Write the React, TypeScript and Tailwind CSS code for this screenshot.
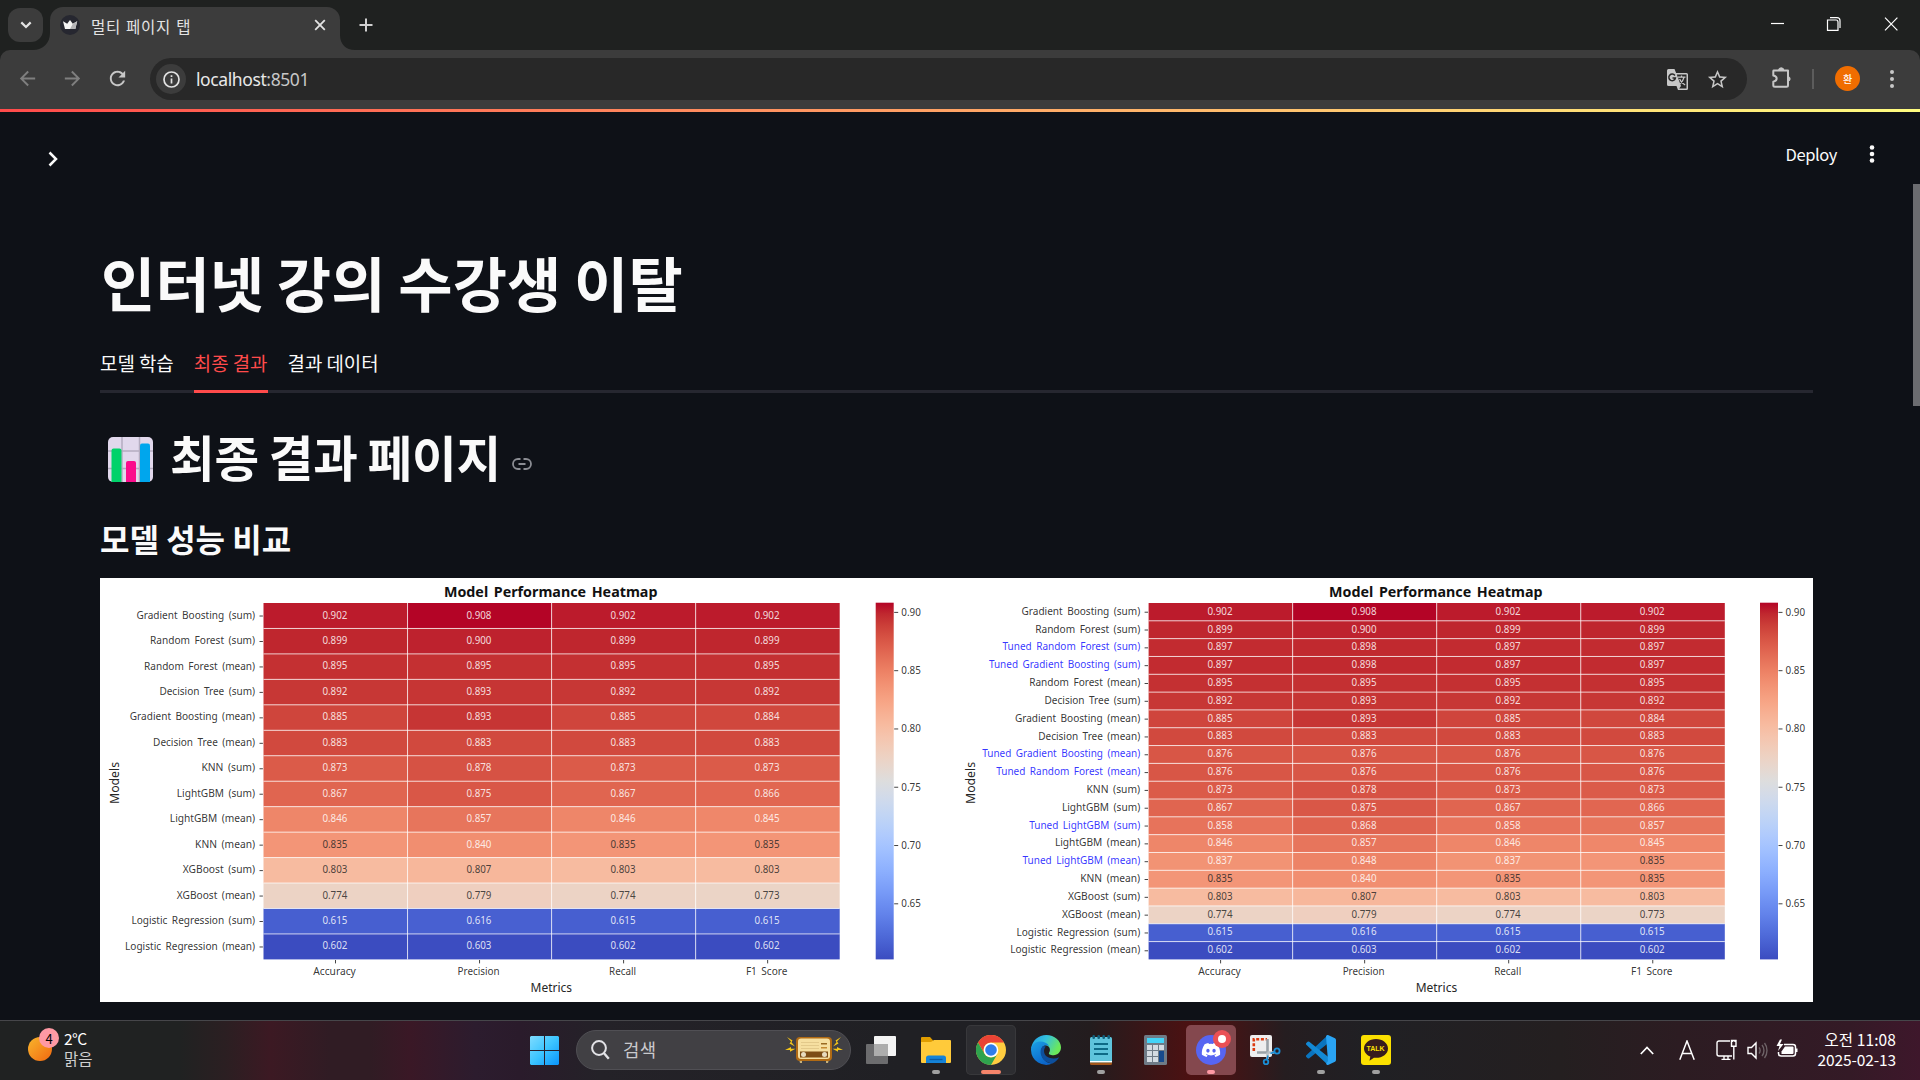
import React from "react";
import { FaDiscord } from "react-icons/fa";

const UI = "font-['Noto_Sans_CJK_KR','Noto_Sans',sans-serif]";

/* ---------- Heatmap data ---------- */

type Row = { name: string; width: number; values: number[]; tuned?: boolean };

const BASE: Record<string, Row> = {
  gbs: { name: "Gradient Boosting (sum)", width: 118.7, values: [0.902, 0.908, 0.902, 0.902] },
  rfs: { name: "Random Forest (sum)", width: 105, values: [0.899, 0.9, 0.899, 0.899] },
  rfm: { name: "Random Forest (mean)", width: 111, values: [0.895, 0.895, 0.895, 0.895] },
  dts: { name: "Decision Tree (sum)", width: 95.7, values: [0.892, 0.893, 0.892, 0.892] },
  gbm: { name: "Gradient Boosting (mean)", width: 125.3, values: [0.885, 0.893, 0.885, 0.884] },
  dtm: { name: "Decision Tree (mean)", width: 102, values: [0.883, 0.883, 0.883, 0.883] },
  kns: { name: "KNN (sum)", width: 53.7, values: [0.873, 0.878, 0.873, 0.873] },
  lgs: { name: "LightGBM (sum)", width: 78.3, values: [0.867, 0.875, 0.867, 0.866] },
  lgm: { name: "LightGBM (mean)", width: 85.3, values: [0.846, 0.857, 0.846, 0.845] },
  knm: { name: "KNN (mean)", width: 60, values: [0.835, 0.84, 0.835, 0.835] },
  xgs: { name: "XGBoost (sum)", width: 72.3, values: [0.803, 0.807, 0.803, 0.803] },
  xgm: { name: "XGBoost (mean)", width: 78.3, values: [0.774, 0.779, 0.774, 0.773] },
  lrs: { name: "Logistic Regression (sum)", width: 123.7, values: [0.615, 0.616, 0.615, 0.615] },
  lrm: { name: "Logistic Regression (mean)", width: 130, values: [0.602, 0.603, 0.602, 0.602] },
  trs: { name: "Tuned Random Forest (sum)", width: 137.7, values: [0.897, 0.898, 0.897, 0.897], tuned: true },
  tgs: { name: "Tuned Gradient Boosting (sum)", width: 151.3, values: [0.897, 0.898, 0.897, 0.897], tuned: true },
  tgm: { name: "Tuned Gradient Boosting (mean)", width: 158, values: [0.876, 0.876, 0.876, 0.876], tuned: true },
  trm: { name: "Tuned Random Forest (mean)", width: 144, values: [0.876, 0.876, 0.876, 0.876], tuned: true },
  tls: { name: "Tuned LightGBM (sum)", width: 111, values: [0.858, 0.868, 0.858, 0.857], tuned: true },
  tlm: { name: "Tuned LightGBM (mean)", width: 117.7, values: [0.837, 0.848, 0.837, 0.835], tuned: true },
};

const LEFT = ["gbs", "rfs", "rfm", "dts", "gbm", "dtm", "kns", "lgs", "lgm", "knm", "xgs", "xgm", "lrs", "lrm"].map((k) => BASE[k]);
const RIGHT = [
  "gbs", "rfs", "trs", "tgs", "rfm", "dts", "gbm", "dtm", "tgm", "trm",
  "kns", "lgs", "tls", "lgm", "tlm", "knm", "xgs", "xgm", "lrs", "lrm",
].map((k) => BASE[k]);

/* The "coolwarm" colour map, sampled at 33 even steps. */
const STOPS = [
  [59, 76, 192], [68, 90, 204], [77, 104, 215], [87, 117, 225], [98, 130, 234], [108, 142, 241], [119, 154, 247], [130, 165, 251],
  [141, 176, 254], [152, 185, 255], [163, 194, 255], [174, 201, 253], [184, 208, 249], [194, 213, 244], [204, 217, 238], [213, 219, 230],
  [221, 221, 221], [229, 216, 209], [236, 211, 197], [241, 204, 185], [245, 196, 173], [247, 187, 160], [247, 177, 148], [247, 166, 135],
  [244, 154, 123], [241, 141, 111], [236, 127, 99], [229, 112, 88], [222, 96, 77], [213, 80, 66], [203, 62, 56], [192, 40, 47],
  [180, 4, 38],
];

function coolwarm(v: number) {
  const t = Math.min(1, Math.max(0, (v - 0.602) / 0.306)) * 32;
  const i = Math.min(31, Math.floor(t));
  const f = t - i;
  const c = STOPS[i].map((a, n) => Math.round(a + (STOPS[i + 1][n] - a) * f));
  return `rgb(${c[0]},${c[1]},${c[2]})`;
}

const METRICS: [string, number][] = [["Accuracy", 42.5], ["Precision", 42], ["Recall", 27], ["F1 Score", 41.5]];

function Heatmap({ rows, x, barX, id, modelsX }: { rows: Row[]; x: number; barX: number; id: string; modelsX: number }) {
  const top = 603;
  const h = 356.4 / rows.length;
  const cw = 144.05;
  return (
    <g>
      <text x={x + 287.2} y={596.5} fontSize={15} fontWeight={700} fill="#111" textAnchor="middle" textLength={213.5} lengthAdjust="spacingAndGlyphs" wordSpacing={2}>
        Model Performance Heatmap
      </text>
      {rows.map((r, ri) => (
        <g key={r.name}>
          {r.values.map((v, ci) => (
            <g key={ci}>
              <rect x={x + ci * cw} y={top + ri * h} width={cw} height={h} fill={coolwarm(v)} />
              <text
                x={x + ci * cw + 71.4}
                y={top + ri * h + h / 2 + 2.8}
                fontSize={11}
                fill={v <= 0.8355 && v > 0.7 ? "#262626" : "#fff"}
                fillOpacity={0.84}
                textAnchor="middle"
                textLength={25}
                lengthAdjust="spacingAndGlyphs"
              >
                {v.toFixed(3)}
              </text>
            </g>
          ))}
          <text x={x - 8.4} y={top + ri * h + h / 2 + 2.9} fontSize={10.8} fill={r.tuned ? "#0000ff" : "#262626"} fillOpacity={r.tuned ? 0.8 : 0.92} textAnchor="end" textLength={r.width} lengthAdjust="spacingAndGlyphs" wordSpacing={2}>
            {r.name}
          </text>
          <path d={`M${x - 4} ${top + ri * h + h / 2 + 0.3}h3.4`} stroke="#444" strokeWidth={1} />
          {ri > 0 && <path d={`M${x} ${top + ri * h}h576.2`} stroke="#fff" strokeOpacity={0.72} strokeWidth={1} />}
        </g>
      ))}
      {[1, 2, 3].map((n) => (
        <path key={n} d={`M${x + n * cw} ${top}v356.4`} stroke="#fff" strokeOpacity={0.72} strokeWidth={1} />
      ))}
      {METRICS.map(([m, w], i) => (
        <g key={m}>
          <path d={`M${x + i * cw + 72} 960v3.4`} stroke="#444" strokeWidth={1} />
          <text x={x + i * cw + 71} y={975} fontSize={10.8} fill="#262626" fillOpacity={0.92} textAnchor="middle" textLength={w} lengthAdjust="spacingAndGlyphs" wordSpacing={2}>
            {m}
          </text>
        </g>
      ))}
      <text x={x + 287.8} y={992} fontSize={12.2} fill="#262626" textAnchor="middle" textLength={41.5} lengthAdjust="spacingAndGlyphs">
        Metrics
      </text>
      <text transform={`translate(${modelsX} 783) rotate(-90)`} fontSize={12.2} fill="#262626" textAnchor="middle" textLength={42} lengthAdjust="spacingAndGlyphs">
        Models
      </text>
      <defs>
        <linearGradient id={id} x1="0" y1="1" x2="0" y2="0">
          {STOPS.map((c, i) => (
            <stop key={i} offset={i / 32} stopColor={`rgb(${c[0]},${c[1]},${c[2]})`} />
          ))}
        </linearGradient>
      </defs>
      <rect x={barX} y={602.7} width={18} height={356.7} fill={`url(#${id})`} />
      {["0.90", "0.85", "0.80", "0.75", "0.70", "0.65"].map((t, i) => (
        <g key={t}>
          <path d={`M${barX + 18.5} ${612.4 + i * 58.28}h4`} stroke="#444" strokeWidth={1} />
          <text x={barX + 25.6} y={615.8 + i * 58.28} fontSize={10.8} fill="#262626" fillOpacity={0.92} textLength={19.5} lengthAdjust="spacingAndGlyphs">
            {t}
          </text>
        </g>
      ))}
    </g>
  );
}

/* ---------- Browser chrome ---------- */

function Tri({ d, size = 20, color = "#c7c7c7" }: { d: string; size?: number; color?: string }) {
  return (
    <svg width={size} height={size} viewBox="0 0 24 24" fill={color} className="shrink-0">
      <path d={d} />
    </svg>
  );
}

const BACK = "M20 11H7.83l5.59-5.59L12 4l-8 8 8 8 1.41-1.41L7.83 13H20v-2z";
const FWD = "M4 11h12.17l-5.59-5.59L12 4l8 8-8 8-1.41-1.41L16.17 13H4v-2z";
const RELOAD =
  "M17.65 6.35C16.2 4.9 14.21 4 12 4c-4.42 0-7.99 3.58-7.99 8s3.57 8 7.99 8c3.73 0 6.84-2.55 7.73-6h-2.08c-.82 2.33-3.04 4-5.65 4-3.31 0-6-2.69-6-6s2.69-6 6-6c1.66 0 3.14.69 4.22 1.78L13 11h7V4l-2.35 2.35z";
const STAR =
  "M22 9.24l-7.19-.62L12 2 9.19 8.63 2 9.24l5.46 4.73L5.82 21 12 17.27 18.18 21l-1.63-7.03L22 9.24zM12 15.4l-3.76 2.27 1-4.28-3.32-2.88 4.38-.38L12 6.1l1.71 4.04 4.38.38-3.32 2.88 1 4.28L12 15.4z";

function TabStrip() {
  return (
    <div className="flex h-[50px] bg-[#1f2120]">
      <div className="mt-2 ml-2 flex h-[34px] w-[35px] items-center justify-center rounded-[12px] bg-[#3c3c3c]">
        <svg width="12" height="8" viewBox="0 0 12 8" fill="none" stroke="#e3e3e3" strokeWidth="2.2">
          <path d="M1.3 1.4 6 6l4.700-4.600" />
        </svg>
      </div>
      <svg width="17" height="17" viewBox="0 0 17 17" className="-ml-[10px] mt-[33px] shrink-0" fill="#3c3c3c">
        <path d="M17 0v17H0C10 17 17 10 17 0z" />
      </svg>
      <div className="mt-[7px] flex h-[43px] w-[290px] items-center rounded-t-[13px] bg-[#3c3c3c] pr-[13px] pb-[7px] pl-[10px]">
        <svg width="20" height="20" viewBox="0 0 20 20">
          <circle cx="10" cy="10" r="10" fill="#262730" />
          <path d="M3 6.300l4.200 2.500L10 5l2.800 3.800L17.200 6.300 15.300 14H5z" fill="#f5f5f5" />
          <path d="M12.800 8.800 17.200 6.300 15.300 14H10z" fill="#b5b5b8" />
        </svg>
        <span className="mt-[2px] ml-[11px] grow text-[15.500px] leading-5 whitespace-nowrap tracking-[0.700px] text-[#e3e3e3] [word-spacing:1px]">멀티 페이지 탭</span>
        <svg width="14" height="14" viewBox="0 0 14 14" stroke="#e3e3e3" strokeWidth="1.800">
          <path d="M2.200 2.200l9.600 9.600M11.800 2.200l-9.600 9.600" />
        </svg>
      </div>
      <svg width="15" height="15" viewBox="0 0 15 15" className="mt-[35px] shrink-0" fill="#3c3c3c">
        <path d="M0 0v15h15C6 15 0 9 0 0z" />
      </svg>
      <svg width="14" height="14" viewBox="0 0 14 14" stroke="#d0d0d0" strokeWidth="2" className="mt-[18px] ml-1">
        <path d="M7 .5v13M.5 7h13" />
      </svg>
      <div className="ml-auto flex h-12 items-center">
        <svg width="127" height="14" viewBox="0 0 127 14" fill="none" stroke="#fff" strokeWidth="1.200" className="mr-[22px]">
          <path d="M0 6.500h13" />
          <path d="M56.500 3h8.500a2 2 0 0 1 2 2v8.400h-10.500z" strokeWidth="1.200" />
          <path d="M59 .7h7a3 3 0 0 1 3 3V11" />
          <path d="M114 .7l12.400 12.600M126.400.7l-12.400 12.600" />
        </svg>
      </div>
    </div>
  );
}

function Toolbar() {
  return (
    <div className="bg-[#1f2120]">
      <div className="flex h-[59px] items-center rounded-t-[10px] bg-[#3c3c3c] pr-[19px] pb-[2px] pl-[16px]">
        <Tri d={BACK} size={23} color="#7f7f7f" />
        <div className="w-[22px]" />
        <Tri d={FWD} size={23} color="#7f7f7f" />
        <div className="w-[22px]" />
        <Tri d={RELOAD} size={23} />
        <div className="mt-px ml-[21px] flex h-[42px] w-[1597px] items-center rounded-full bg-[#282828] pl-[6px]">
          <div className="flex size-[30px] items-center justify-center rounded-full bg-[#3c3c3c]">
            <svg width="17" height="17" viewBox="0 0 17 17" fill="none" stroke="#e3e3e3" strokeWidth="1.700">
              <circle cx="8.500" cy="8.500" r="7.500" />
              <path d="M8.500 7.500v5M8.500 4.300v1.800" />
            </svg>
          </div>
          <span className="mb-px ml-[10px] grow font-['Noto_Sans'] text-[17.500px] leading-6 tracking-[-0.400px] text-[#e8e8e8]">
            localhost<span className="text-[#c7c7c7]">:8501</span>
          </span>
          <svg width="21" height="21" viewBox="0 0 21 21" className="mr-[18px] shrink-0">
            <path d="M1.500 0h6l1.600 4h10.400A1.500 1.500 0 0 1 21 5.500v14a1.500 1.500 0 0 1-1.500 1.500H11l-1.500-4h-8A1.500 1.500 0 0 1 0 15.500v-14A1.500 1.500 0 0 1 1.500 0z" fill="#c7c7c7" />
            <path d="M9.800 5.500h9.700v14h-7.300l1.800-2.500z" fill="#282828" />
            <path d="M11 8.200h7.500M14.500 6.500v1.700M17 8.400c-.7 3-2.800 5.500-4.500 6.800M12.600 10c1 2.500 3 4.800 5.600 6" stroke="#c7c7c7" strokeWidth="1.300" fill="none" />
            <path d="M7.900 6.500A3.300 3.300 0 1 0 8.400 9H5.500" stroke="#282828" strokeWidth="1.500" fill="none" />
          </svg>
          <Tri d={STAR} size={23} />
          <div className="w-[18px]" />
        </div>
        <svg width="23" height="23" viewBox="0 0 23 23" className="ml-[24px] shrink-0" fill="none" stroke="#c7c7c7" strokeWidth="2">
          <path d="M2.500 3.500H17v14.800a1.500 1.500 0 0 1-1.500 1.500H3.800a1.500 1.500 0 0 1-1.500-1.500v-3.600c4.500-.8 4.500-5.400 0-6.200V4.500z" strokeLinejoin="round" />
          <path d="M7.500 3.500a2.700 2.700 0 0 1 5.400 0zM17.500 9.500a2.600 2.600 0 0 1 0 4.800z" fill="#c7c7c7" strokeWidth="1" />
        </svg>
        <div className="ml-[18px] h-[20px] w-[2px] bg-[#5c5c5c]" />
        <div className="ml-[21px] flex size-[25px] items-center justify-center rounded-full bg-[#f06d00] text-[10px] leading-none font-medium text-white">환</div>
        <svg width="4" height="20" viewBox="0 0 4 20" fill="#c7c7c7" className="mr-[7px] ml-auto">
          <circle cx="2" cy="3" r="2" />
          <circle cx="2" cy="10" r="2" />
          <circle cx="2" cy="17" r="2" />
        </svg>
      </div>
    </div>
  );
}

/* ---------- Taskbar ---------- */

function Task({ children, dot, active }: { children: React.ReactNode; dot?: string; active?: string }) {
  return (
    <div className="flex h-full w-[55px] items-start justify-center pt-1">
      <div className={`relative flex h-[50px] w-[50px] items-center justify-center rounded-[5px] ${active ?? ""}`}>
        {children}
        {dot && <div className={`absolute bottom-px left-1/2 h-1 -translate-x-1/2 rounded-full ${dot}`} />}
      </div>
    </div>
  );
}

const DOT = "w-2 bg-[#a0a0a0]";

function Radio() {
  return (
    <svg width="58" height="28" viewBox="0 0 58 28">
      <g fill="#f5c518">
        <path d="M2 1l5.500 3.500-1 1.800L10 10.500 4.500 7.500 6 5.500zM0 14l6-3v1.800h4.500L5 15.800V14zM56 1l-5.500 3.500 1 1.800L48 10.500l5.500-3L52 5.500zM58 14l-6-3v1.800h-4.500l5.500 3V14z" />
      </g>
      <path d="M14 23h3v4h-2zM41 23h3l-1 4h-2z" fill="#c8b27a" />
      <rect x="11" y="1" width="36" height="24" rx="4" fill="#b06a14" />
      <rect x="13" y="2.500" width="32" height="20.500" rx="3" fill="#f6dfa0" />
      <path d="M16 6.500h18M16 9.500h18M16 12.500h18" stroke="#e3c98a" />
      <rect x="36" y="7" width="6" height="1.500" fill="#9a6a22" />
      <rect x="36" y="11" width="6" height="1.500" fill="#c58a32" />
      <rect x="15" y="15.500" width="28" height="6" fill="#7d4d16" />
      <circle cx="18.500" cy="18.500" r="2.500" fill="#e8dcc0" />
      <circle cx="39.500" cy="18.500" r="2.500" fill="#e8dcc0" />
    </svg>
  );
}

function Taskbar() {
  return (
    <div className="flex h-[60px] border-t border-[#46464a] bg-[linear-gradient(90deg,#202222_0px,#202222_180px,#2b1f22_225px,#3c1923_270px,#301c24_330px,#301c24_370px,#3a1826_410px,#2c1c2e_475px,#2a1b2b_520px,#242228_600px,#202024_900px,#202024_1000px,#231c1e_1090px,#4c1112_1190px,#4a1213_1215px,#251d20_1285px,#202024_1370px,#241f20_1560px,#2c1c22_1680px,#341a26_1850px,#3e172b_1920px)]">
      <div className="flex w-[517px] pl-[28px]">
        <div className="relative mt-[5px] h-[42px] w-[36px]">
          <div className="mt-[11px] size-6 rounded-full bg-linear-to-br from-[#f7b52c] to-[#f0660f]" />
          <div className="absolute top-[2px] left-[11px] flex size-5 items-center justify-center rounded-full bg-[#ff99a4] text-[13px] leading-none text-black">4</div>
        </div>
        <div className="flex flex-col pt-[7px] text-[15.500px] leading-5 text-white">
          <span className="tracking-[-0.500px]">2°C</span>
          <span className="text-[#d0d0d0]">맑음</span>
        </div>
      </div>
      <Task>
        <svg width="29" height="29" viewBox="0 0 29 29">
          <defs>
            <linearGradient id="win" x1="0" y1="0" x2="1" y2="1">
              <stop offset="0" stopColor="#7fdcff" />
              <stop offset=".5" stopColor="#3cc4ff" />
              <stop offset="1" stopColor="#0a94fb" />
            </linearGradient>
          </defs>
          <path d="M1 0h13v14H0V1zM15 0h13l1 1v13H15zM0 15h14v14H1l-1-1zM15 15h14v13l-1 1H15z" fill="url(#win)" />
        </svg>
      </Task>
      <div className="mt-[9px] ml-[4px] flex h-10 w-[275px] items-center rounded-full border border-[#504f54] bg-[#414044] pr-[7px] pl-[14px]">
        <svg width="19" height="20" viewBox="0 0 19 20" fill="none" stroke="#e2e2e6" strokeWidth="2">
          <circle cx="8" cy="8" r="6.900" />
          <path d="M12.800 13l5 5.800" strokeWidth="2.400" />
        </svg>
        <span className="mb-[3px] ml-[13px] grow text-[17.800px] leading-6 tracking-[0.300px] text-[#c9c9cc]">검색</span>
        <Radio />
      </div>
      <div className="ml-[2px] flex">
        <Task>
          <svg width="30" height="28" viewBox="0 0 30 28">
            <rect x="8" y="0" width="22" height="20" rx="1" fill="#f4f4f4" />
            <rect x="0" y="8" width="22" height="20" rx="1" fill="#6c6c6e" />
            <path d="M8 8h14v12H8z" fill="#adadad" />
          </svg>
        </Task>
        <Task dot={DOT}>
          <svg width="30" height="27" viewBox="0 0 30 27">
            <path d="M0 1a1 1 0 0 1 1-1h8l3.500 4H16v5H0z" fill="#e09d00" />
            <path d="M0 5h10l3-2h16a1 1 0 0 1 1 1v21a1 1 0 0 1-1 1H1a1 1 0 0 1-1-1z" fill="#ffca3a" />
            <path d="M5 26v-5a2.500 2.500 0 0 1 2.500-2.500h15A2.500 2.500 0 0 1 25 21v5z" fill="#1583d8" />
            <path d="M8.500 22.500h13" stroke="#0b5ba5" strokeWidth="1.300" />
          </svg>
        </Task>
        <Task active="ring-1 ring-inset ring-[#38383b] bg-[#2d2d31]" dot="w-5 bg-[#f4846a]">
          <svg width="30" height="30" viewBox="0 0 30 30">
            <circle cx="15" cy="15" r="15" fill="#ffcd40" />
            <path d="M2 7.500A15 15 0 0 1 28 7.500H15A7.500 7.500 0 0 0 8.500 18.700z" fill="#ea4335" />
            <path d="M2 7.500A15 15 0 0 0 15 30l6.500-11.300a7.500 7.500 0 0 1-13 0z" fill="#2fa34e" />
            <circle cx="15" cy="15" r="7.300" fill="#fff" />
            <circle cx="15" cy="15" r="5.800" fill="#2f7de9" />
          </svg>
        </Task>
        <Task>
          <svg width="30" height="30" viewBox="0 0 30 30">
            <defs>
              <linearGradient id="edA" x1="0" y1="0" x2="1" y2=".4">
                <stop offset="0" stopColor="#1c9be8" />
                <stop offset=".5" stopColor="#35c2dd" />
                <stop offset="1" stopColor="#6be85a" />
              </linearGradient>
              <linearGradient id="edB" x1="0" y1="0" x2=".6" y2="1">
                <stop offset="0" stopColor="#1ba1e6" />
                <stop offset="1" stopColor="#0b63c8" />
              </linearGradient>
            </defs>
            <path d="M0 14C1 5.500 7.500 0 15.300 0 23.500 0 30 5.800 30 12.300c0 4.700-3.400 7.900-7.400 7.900-3.500 0-5.300-1.300-4.600-2.300 2.500-3.600 0-7.900-4.600-7.900C7 10 1 13 0 14z" fill="url(#edA)" />
            <path d="M0 14c1-5 5-7.500 9.500-7.500 3.700 0 7 1.500 8.500 4.500-6-2.500-8.500 2.500-7.500 8 1 5.800 5.500 9.500 11 9.400A15 15 0 0 1 0 15z" fill="url(#edB)" />
            <path d="M11.800 11.200c-4.300 3.500-2.800 16 9.700 17.200 3-1.300 5.300-3.500 6.700-6.100-6 2.700-14.500.6-15.100-5.300-.2-2 .3-4 1.700-5.400-.9-.5-2-.8-3-.4z" fill="#0d4f9c" />
          </svg>
        </Task>
        <Task dot={DOT}>
          <svg width="22" height="30" viewBox="0 0 22 30">
            <rect x="0" y="2" width="22" height="27" rx="1.500" fill="#5ec4dc" />
            <path d="M0 26h22v1.500H0z" fill="#fff" />
            <path d="M0 27.500h22v1a1.500 1.500 0 0 1-1.500 1.500h-19A1.500 1.500 0 0 1 0 28.500z" fill="#a3561a" />
            <path d="M4 9h14M4 14h14M4 19h14" stroke="#0d6a86" strokeWidth="1.800" />
            <path d="M3.700 1.300v1.500M8.700 1.300v1.500M13.700 1.300v1.500M18.700 1.300v1.500" stroke="#12607c" strokeWidth="2.600" strokeLinecap="round" />
          </svg>
        </Task>
        <Task>
          <svg width="23" height="30" viewBox="0 0 23 30">
            <rect width="23" height="30" rx="1.500" fill="#6f7b87" />
            <rect x="3" y="3" width="17" height="5" fill="#44d4f8" />
            <path d="M3 10h5v5H3zM9 10h5v5H9zM15 10h5v5h-5zM3 16h5v5H3zM9 16h5v5H9zM3 22h5v5H3zM9 22h5v5H9z" fill="#d4dbe2" />
            <path d="M15 16h5v11h-5z" fill="#174a8c" />
          </svg>
        </Task>
        <Task active="bg-[#84484e]" dot="w-2 bg-[#ff99a4]">
          <div className="flex size-[30px] items-center justify-center rounded-full bg-[#5765f2]">
            <FaDiscord size={20} color="#fff" />
          </div>
          <div className="absolute top-[5px] right-[5px] flex size-[18px] items-center justify-center rounded-full bg-[#ea5055]">
            <div className="size-[8px] rounded-full bg-white" />
          </div>
        </Task>
        <Task>
          <svg width="31" height="30" viewBox="0 0 31 30" className="-ml-px">
            <rect x="0" y="0" width="22" height="22" rx="2" fill="#eeeeef" />
            <path d="M3.800 16V4.300H17" stroke="#dc3a10" strokeWidth="2.600" fill="none" strokeDasharray="3 1.700" />
            <path d="M17.500 4v13.500H7" stroke="#9aa2a8" strokeWidth="2.600" fill="none" />
            <path d="M17.500 17.500h7M17.500 17.500v6.500" stroke="#b8c0c6" strokeWidth="2.600" />
            <circle cx="27" cy="16" r="2.600" fill="none" stroke="#1a8fd8" strokeWidth="1.800" />
            <circle cx="16" cy="27" r="2.300" fill="none" stroke="#1a8fd8" strokeWidth="1.800" />
            <path d="M24.500 17l-4 1.500M17 24.500l1-4" stroke="#1a8fd8" strokeWidth="1.500" />
          </svg>
        </Task>
        <Task dot={DOT}>
          <svg width="30" height="30" viewBox="0 0 30 30">
            <path d="M22 0v8.200L3.300 23.200a1.300 1.300 0 0 1-1.700 0L.3 22a1.200 1.200 0 0 1 0-1.700z" fill="#0a74be" />
            <path d="M22 30v-8.200L3.300 6.800a1.300 1.300 0 0 0-1.700 0L.3 8a1.200 1.200 0 0 0 0 1.700z" fill="#1389d4" />
            <path d="M22 0l7 3.300a1.800 1.800 0 0 1 1 1.600v20.200a1.800 1.800 0 0 1-1 1.600L22 30c-1 .2-1.700-.5-1.900-1.200L22 26z" fill="#2aa4f4" />
            <path d="M20 1.200C20.300.3 21.300-.2 22 0v26z" fill="#2aa4f4" />
          </svg>
        </Task>
        <Task dot={DOT}>
          <div className="relative flex size-[30px] items-center justify-center rounded-[3px] bg-[#fbe000]">
            <svg width="24" height="22" viewBox="0 0 24 22" fill="#371c1d">
              <path d="M12 0c6.600 0 12 4.200 12 9.400s-5.400 9.400-12 9.400c-.7 0-1.400 0-2.100-.1L5.500 21.800l.8-4.200C2.600 16 0 13 0 9.400 0 4.200 5.400 0 12 0z" />
            </svg>
            <span className="absolute top-[10px] font-['Liberation_Sans'] text-[7px] leading-none font-bold text-[#fbe000]">TALK</span>
          </div>
        </Task>
      </div>
      <div className="ml-auto flex items-center pr-[24px] pb-px">
        <svg width="14" height="9" viewBox="0 0 14 9" fill="none" stroke="#fff" strokeWidth="1.700">
          <path d="M.8 8 7 1.500 13.200 8" />
        </svg>
        <svg width="16" height="20" viewBox="0 0 16 20" className="ml-[25px]" fill="none" stroke="#fff" strokeWidth="1.500">
          <path d="M.8 19.700 8 1l7.200 18.700M3.200 13.500h9.600" />
        </svg>
        <svg width="82" height="22" viewBox="0 0 82 22" className="ml-[21px]" fill="none" stroke="#fff" strokeWidth="1.400">
          <path d="M14 2H3a2 2 0 0 0-2 2v11a2 2 0 0 0 2 2h13M5.500 20.400h9M8 17v3M12 17v3" />
          <path d="M15.500 1.500h4.500v5.800h-4.500zM17.800 7.500v13M16.500 1v2M19 1v2" />
          <path d="M32 8.500h3.500L40 4v15l-4.500-4.500H32z" />
          <path d="M43 8.500c1.500 1.500 1.500 4.500 0 6M46 6c2.600 3 2.600 8 0 11M48.500 4c3.300 4 3.300 11 0 15" stroke="#6d6266" />
          <path d="M68 5.500h9a2.500 2.500 0 0 1 2.500 2.500v6.500a2.500 2.500 0 0 1-2.500 2.500H65a2.500 2.500 0 0 1-2.500-2.500V13" strokeWidth="1.500" />
          <path d="M69 7.500h7.500a1 1 0 0 1 1 1V14a1 1 0 0 1-1 1h-11v-2.500z" fill="#fff" stroke="none" />
          <path d="M80.500 9.500v3.500" strokeWidth="2" />
          <path d="M64 .5 60.500 7h3L62 12l5.500-7h-3.500l2-4.500z" fill="#fff" stroke="none" />
        </svg>
        <div className="mb-[3px] ml-[16px] flex w-[82px] flex-col items-end text-[15.500px] leading-5 whitespace-nowrap text-white">
          <span className="tracking-[0.100px]">오전 11:08</span>
          <span className="tracking-[-0.100px]">2025-02-13</span>
        </div>
      </div>
    </div>
  );
}

/* ---------- Page ---------- */

export default function App() {
  return (
    <div className={`flex h-[1080px] w-[1920px] flex-col overflow-hidden bg-[#0e1117] ${UI}`}>
      <TabStrip />
      <Toolbar />
      <div className="h-[3px] bg-[linear-gradient(90deg,#ff4b4b,#fffd80)]" />
      <div className="flex h-[72px] items-center justify-between pr-[45px] pl-[48px] text-[#fafafa]">
        <svg width="10" height="16" viewBox="0 0 10 16" fill="none" stroke="#fafafa" strokeWidth="2.500" className="mt-[22px]">
          <path d="M1.500 1.500 8 8l-6.500 6.500" />
        </svg>
        <div className="flex items-center pt-[12px]">
          <span className="mb-px text-[16.500px] leading-6 tracking-[-0.400px]">Deploy</span>
          <svg width="6" height="18" viewBox="0 0 6 18" fill="#fafafa" className="ml-[32px]">
            <circle cx="3" cy="2.500" r="2.300" />
            <circle cx="3" cy="9" r="2.300" />
            <circle cx="3" cy="15.500" r="2.300" />
          </svg>
        </div>
      </div>
      <div className="flex h-[836px] justify-between">
        <div className="ml-[100px] flex w-[1713px] flex-col text-[#fafafa]">
          <h1 className="mt-[61px] ml-px h-[72px] text-[59px] leading-[73px] font-bold tracking-[0.150px] whitespace-nowrap [word-spacing:-1px]">인터넷 강의 수강생 이탈</h1>
          <div className="mt-[25px] flex h-[51px] gap-5 border-b-[3px] border-[#262730] text-[18.900px] leading-[42px] whitespace-nowrap">
            <span>모델 학습</span>
            <span className="-mb-[3px] border-b-[3px] border-[#ff4b4b] text-[#ff4b4b]">최종 결과</span>
            <span>결과 데이터</span>
          </div>
          <h2 className="mt-[31px] flex h-[66px] items-center text-[48.500px] leading-[66px] font-bold tracking-[-0.150px] whitespace-nowrap [word-spacing:-1px]">
            <svg width="45" height="45" viewBox="0 0 45 45" className="mt-[5px] ml-[8px]">
              <rect width="45" height="45" rx="5" fill="#e1d8ec" />
              <path d="M0 14h45M0 31.500h45M14 0v45M31.500 0v45" stroke="#b4acc0" strokeWidth="1.500" />
              <path d="M3.500 45V13.500a2 2 0 0 1 2-2h6a2 2 0 0 1 2 2V45z" fill="#00d26a" />
              <path d="M18 45V26a2 2 0 0 1 2-2h6a2 2 0 0 1 2 2v19z" fill="#fb0c8c" />
              <path d="M32 45V8.500a2 2 0 0 1 2-2h6a2 2 0 0 1 2 2V45z" fill="#00a6ed" />
            </svg>
            <span className="mb-[2px] ml-[17px]">최종 결과 페이지</span>
            <svg width="20" height="12" viewBox="0 0 20 12" className="mt-[14px] ml-[11px]" fill="none" stroke="#8b8d93" strokeWidth="1.800">
              <path d="M8.500 1H6a5 5 0 0 0 0 10h2.500M11.500 1H14a5 5 0 0 1 0 10h-2.500M6.500 6h7" />
            </svg>
          </h2>
          <h3 className="mt-[25px] h-[46px] text-[32px] leading-[46px] font-bold whitespace-nowrap">모델 성능 비교</h3>
          <div className="mt-auto mb-[18px] h-[424px] w-[1713px] bg-white">
            <svg width="1713" height="424" viewBox="100 578 1713 424" className="font-['Noto_Sans']">
              <Heatmap rows={LEFT} x={263.5} barX={875.7} id="barLeft" modelsX={118.8} />
              <Heatmap rows={RIGHT} x={1148.6} barX={1760} id="barRight" modelsX={975.3} />
            </svg>
          </div>
        </div>
        <div className="h-[222px] w-[7px] bg-[#6b6c70]" />
      </div>
      <Taskbar />
    </div>
  );
}
